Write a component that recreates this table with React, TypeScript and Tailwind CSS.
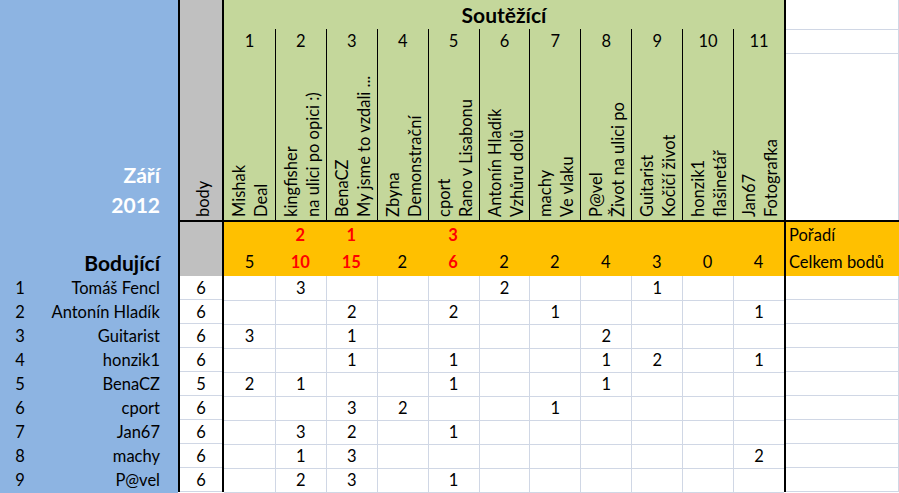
import React from "react";

const cols: [string, string][] = [
  ["Mishak", "Deal"],
  ["kingfisher", "na ulici po opici :)"],
  ["BenaCZ", "My jsme to vzdali ..."],
  ["Zbyna", "Demonstrační"],
  ["cport", "Rano v Lisabonu"],
  ["Antonín Hladík", "Vzhůru dolů"],
  ["machy", "Ve vlaku"],
  ["P@vel", "Život na ulici po"],
  ["Guitarist", "Kočičí život"],
  ["honzik1", "flašinetář"],
  ["Jan67", "Fotografka"],
];

const rank: Record<number, string> = { 2: "2", 3: "1", 5: "3" };
const totals = [5, 10, 15, 2, 6, 2, 2, 4, 3, 0, 4];
const redTotals = new Set([2, 3, 5]);

const rows: { name: string; body: number; v: Record<number, number> }[] = [
  { name: "Tomáš Fencl", body: 6, v: { 2: 3, 6: 2, 9: 1 } },
  { name: "Antonín Hladík", body: 6, v: { 3: 2, 5: 2, 7: 1, 11: 1 } },
  { name: "Guitarist", body: 6, v: { 1: 3, 3: 1, 8: 2 } },
  { name: "honzik1", body: 6, v: { 3: 1, 5: 1, 8: 1, 9: 2, 11: 1 } },
  { name: "BenaCZ", body: 5, v: { 1: 2, 2: 1, 5: 1, 8: 1 } },
  { name: "cport", body: 6, v: { 3: 3, 4: 2, 7: 1 } },
  { name: "Jan67", body: 6, v: { 2: 3, 3: 2, 5: 1 } },
  { name: "machy", body: 6, v: { 2: 1, 3: 3, 11: 2 } },
  { name: "P@vel", body: 6, v: { 2: 2, 3: 3, 5: 1 } },
];

const idx = Array.from({ length: 11 }, (_, i) => i + 1);

export default function App() {
  return (
    <div className="w-[899px] h-[493px] overflow-hidden bg-white text-black font-['Lato',sans-serif] text-[16.5px] flex">
      {/* Blue left column */}
      <div className="w-[178px] h-full bg-[#8db4e2] flex flex-col shrink-0">
        <div className="h-[220px] flex flex-col justify-end items-end pr-[18px] text-white font-bold text-[21px] leading-[30px]">
          <div>Září</div>
          <div>2012</div>
        </div>
        <div className="h-[2px]" />
        <div className="h-[27px]" />
        <div className="h-[27px] flex justify-end pr-[18px] font-bold text-[21px] leading-[27px]">
          Bodující
        </div>
        {rows.map((r, i) => (
          <div key={i} className="h-[24px] flex items-start leading-[24px]">
            <div className="w-[40px] text-center">{i + 1}</div>
            <div className="flex-1 text-right pr-[18px]">{r.name}</div>
          </div>
        ))}
      </div>

      {/* Right part */}
      <div className="flex-1 flex flex-col">
        {/* Header */}
        <div className="h-[220px] flex">
          <div className="w-[2px] bg-black" />
          <div className="w-[42px] h-[220px] bg-[#c0c0c0] flex pl-[12px] overflow-hidden">
            <div className="[writing-mode:vertical-rl] rotate-180 h-[220px] pt-[3px] leading-[22px] whitespace-nowrap">
              body
            </div>
          </div>
          <div className="w-[2px] bg-black" />
          <div className="w-[560px] h-[220px] bg-[#c4d79b] flex flex-col">
            <div className="h-[29px] text-center font-bold text-[21px] leading-[29px]">
              Soutěžící
            </div>
            <div className="h-[191px] grid grid-cols-11 grid-rows-[191px]">
              {cols.map((c, i) => (
                <div
                  key={i}
                  className={`h-[191px] flex flex-col overflow-hidden ${
                    i > 0 ? "border-l border-black" : ""
                  }`}
                >
                  <div className="h-[24px] text-center leading-[24px]">{i + 1}</div>
                  <div className="h-[167px] pl-[4px] flex overflow-hidden">
                    <div className="[writing-mode:vertical-rl] rotate-180 h-[167px] pt-[3px] leading-[22px] whitespace-nowrap">
                      <div>{c[0]}</div>
                      <div>{c[1]}</div>
                    </div>
                  </div>
                </div>
              ))}
            </div>
          </div>
          <div className="w-[2px] bg-black" />
          <div className="flex-1 flex flex-col border-r border-[#d0d7e5]">
            <div className="h-[30px] border-b border-[#d0d7e5]" />
            <div className="h-[24px] border-b border-[#d0d7e5]" />
            <div className="flex-1" />
          </div>
        </div>

        {/* Black rule */}
        <div className="h-[2px] bg-black" />

        {/* Orange rows */}
        <div className="h-[54px] flex">
          <div className="w-[2px] bg-black" />
          <div className="w-[42px] bg-[#c0c0c0]" />
          <div className="w-[2px] bg-black" />
          <div className="w-[560px] bg-[#ffc000] grid grid-cols-11">
            {idx.map((c) => (
              <div key={c} className="flex flex-col text-center">
                <div className="h-[27px] leading-[27px] font-bold text-[#ff0000]">
                  {rank[c] ?? ""}
                </div>
                <div
                  className={`h-[27px] leading-[27px] ${
                    redTotals.has(c) ? "font-bold text-[#ff0000]" : ""
                  }`}
                >
                  {totals[c - 1]}
                </div>
              </div>
            ))}
          </div>
          <div className="w-[2px] bg-black" />
          <div className="flex-1 bg-[#ffc000] flex flex-col pl-[3px]">
            <div className="h-[27px] leading-[27px]">Pořadí</div>
            <div className="h-[27px] leading-[27px] whitespace-nowrap">Celkem bodů</div>
          </div>
        </div>

        {/* Data rows */}
        {rows.map((r, ri) => (
          <div key={ri} className="h-[24px] flex shrink-0">
            <div className="w-[2px] bg-black" />
            <div className="w-[42px] border-b border-[#d0d7e5] text-center leading-[24px]">
              {r.body}
            </div>
            <div className="w-[2px] bg-black" />
            <div className="w-[560px] grid grid-cols-11">
              {idx.map((c) => (
                <div
                  key={c}
                  className={`border-b border-[#d0d7e5] text-center leading-[24px] ${
                    c > 1 ? "border-l" : ""
                  }`}
                >
                  {r.v[c] ?? ""}
                </div>
              ))}
            </div>
            <div className="w-[2px] bg-black" />
            <div className="flex-1 border-b border-r border-[#d0d7e5]" />
          </div>
        ))}
      </div>
    </div>
  );
}
